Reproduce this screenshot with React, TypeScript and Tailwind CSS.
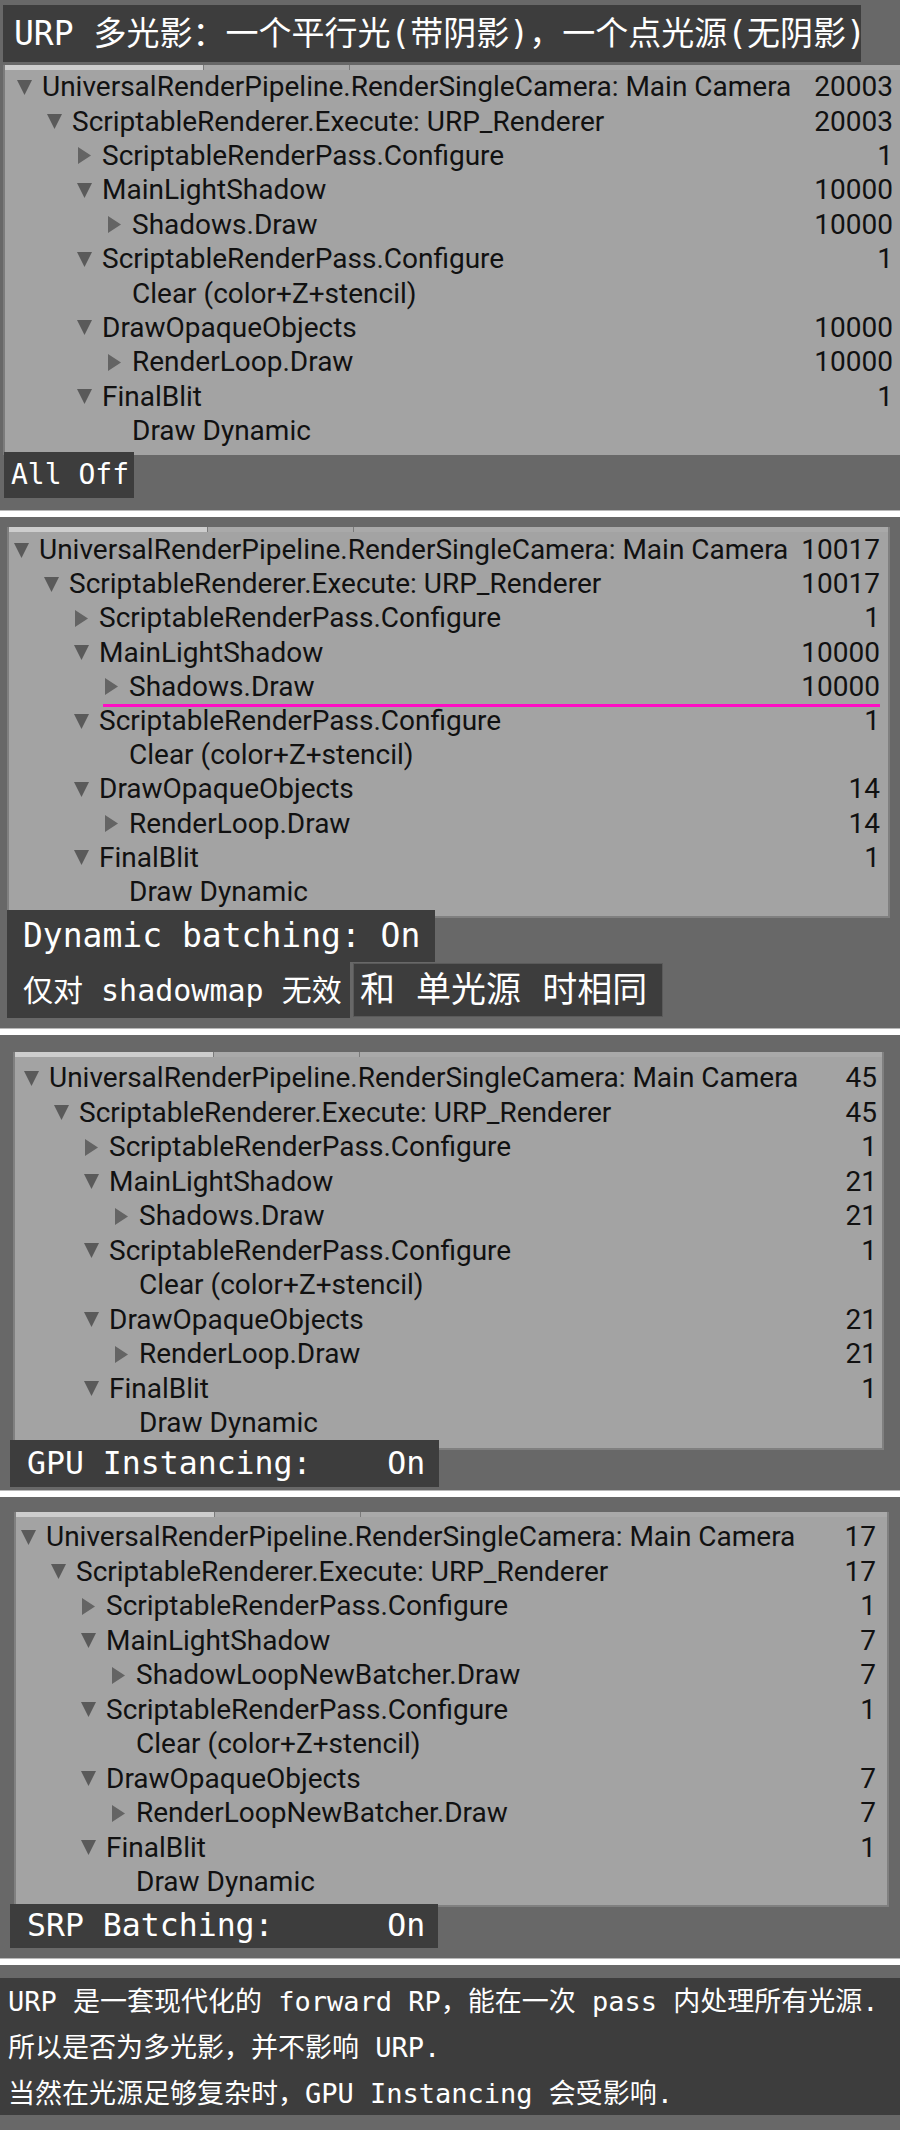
import React from 'react';

type Arrow = 'down' | 'right' | 'none';
type Row = { level: number; label: string; count: string; arrow: Arrow; mark?: boolean };

const buildRows = (c: string[], shadowLabel: string, loopLabel: string, markShadow = false): Row[] => [
  { level: 0, arrow: 'down', label: 'UniversalRenderPipeline.RenderSingleCamera: Main Camera', count: c[0] },
  { level: 1, arrow: 'down', label: 'ScriptableRenderer.Execute: URP_Renderer', count: c[1] },
  { level: 2, arrow: 'right', label: 'ScriptableRenderPass.Configure', count: '1' },
  { level: 2, arrow: 'down', label: 'MainLightShadow', count: c[2] },
  { level: 3, arrow: 'right', label: shadowLabel, count: c[2], mark: markShadow },
  { level: 2, arrow: 'down', label: 'ScriptableRenderPass.Configure', count: '1' },
  { level: 3, arrow: 'none', label: 'Clear (color+Z+stencil)', count: '' },
  { level: 2, arrow: 'down', label: 'DrawOpaqueObjects', count: c[3] },
  { level: 3, arrow: 'right', label: loopLabel, count: c[3] },
  { level: 2, arrow: 'down', label: 'FinalBlit', count: '1' },
  { level: 3, arrow: 'none', label: 'Draw Dynamic', count: '' },
];

const indentCls = ['w-0', 'w-[30px]', 'w-[60px]', 'w-[90px]'];

const MONO = "[font-family:'DejaVu_Sans_Mono','Noto_Sans_CJK_SC',monospace]";

function ArrowIcon({ arrow }: { arrow: Arrow }) {
  if (arrow === 'down')
    return (
      <svg width="15" height="15" viewBox="0 0 15 15" className="ml-[1px]">
        <path d="M0 0H15L7.5 15Z" fill="#5a5a5a" />
      </svg>
    );
  if (arrow === 'right')
    return (
      <svg width="13" height="17" viewBox="0 0 13 17" className="ml-[2px]">
        <path d="M0 0L13 8.5L0 17Z" fill="#646464" />
      </svg>
    );
  return null;
}

function TreeRow({ row, hCls }: { row: Row; hCls: string }) {
  return (
    <div className={`flex items-center ${hCls}`}>
      <div className={`shrink-0 ${indentCls[row.level]}`} />
      <div
        className={`flex h-full flex-1 items-center ${row.mark ? 'shadow-[0_3px_0_#ff0dc4]' : ''}`}
      >
        <span className="flex w-[26px] shrink-0 items-center">
          <ArrowIcon arrow={row.arrow} />
        </span>
        <span className="flex-1 whitespace-nowrap">{row.label}</span>
        <span className="whitespace-nowrap">{row.count}</span>
      </div>
    </div>
  );
}

function TabStrip() {
  return (
    <div className="flex h-[5px] shrink-0">
      <div className="w-[198px] bg-[#cdcdcd]" />
      <div className="w-[1px] bg-[#7a7a7a]" />
      <div className="w-[145px] bg-[#a9a9a9]" />
      <div className="w-[1px] bg-[#7a7a7a]" />
      <div className="flex-1 bg-[#a9a9a9]" />
    </div>
  );
}

function Tree({ rows, hCls }: { rows: Row[]; hCls: string }) {
  return (
    <>
      {rows.map((r, i) => (
        <TreeRow key={i} row={r} hCls={hCls} />
      ))}
    </>
  );
}

const TREE_TEXT = "[font-family:Roboto,'Noto_Sans',sans-serif] text-[28px] text-[#111111]";

function Separator() {
  return <div className="h-[7px] shrink-0 border-t border-[#b8b8b8] bg-white" />;
}

export default function App() {
  const rows1 = buildRows(['20003', '20003', '10000', '10000'], 'Shadows.Draw', 'RenderLoop.Draw');
  const rows2 = buildRows(['10017', '10017', '10000', '14'], 'Shadows.Draw', 'RenderLoop.Draw', true);
  const rows3 = buildRows(['45', '45', '21', '21'], 'Shadows.Draw', 'RenderLoop.Draw');
  const rows4 = buildRows(['17', '17', '7', '7'], 'ShadowLoopNewBatcher.Draw', 'RenderLoopNewBatcher.Draw');

  return (
    <div className="flex w-[900px] flex-col">
      {/* Section 1 */}
      <section className="flex h-[510px] shrink-0 flex-col bg-[#686868] pt-[5px]">
        <div
          className={`ml-[3px] flex h-[57px] w-[858px] items-center whitespace-nowrap bg-[#3d3d3d] pl-[11px] text-[33px] text-white ${MONO}`}
        >
          URP 多光影：一个平行光(带阴影)，一个点光源(无阴影)
        </div>
        <div className={`mt-[3px] ml-[3px] flex flex-col border-l-2 border-[#7c7c7c] bg-[#a3a3a3] pb-[7px] ${TREE_TEXT}`}>
          <TabStrip />
          <div className="flex flex-col pl-[11px] pr-[7px]">
            <Tree rows={rows1} hCls="h-[34.4px]" />
          </div>
        </div>
        <div
          className={`relative mt-[-3px] ml-[4px] flex h-[46px] w-[130px] items-center bg-[#3d3d3d] pl-[7px] text-[28px] text-white ${MONO}`}
        >
          All Off
        </div>
      </section>
      <Separator />

      {/* Section 2 */}
      <section className="flex h-[511px] shrink-0 flex-col bg-[#686868] pt-[10px]">
        <div className={`ml-[7px] flex w-[883px] flex-col border-x-2 border-b-2 border-[#808080] bg-[#a3a3a3] pb-[7px] ${TREE_TEXT}`}>
          <TabStrip />
          <div className="flex flex-col pt-[1px] pl-[4px] pr-[8px]">
            <Tree rows={rows2} hCls="h-[34.2px]" />
          </div>
        </div>
        <div
          className={`relative mt-[-8px] ml-[7px] flex h-[52px] w-[428px] items-center whitespace-nowrap bg-[#3d3d3d] pl-[16px] text-[33px] text-white ${MONO}`}
        >
          Dynamic batching: On
        </div>
        <div className="ml-[7px] flex">
          <div
            className={`flex h-[56px] w-[343px] items-center whitespace-nowrap bg-[#3d3d3d] pl-[16px] text-[30px] text-white ${MONO}`}
          >
            仅对 shadowmap 无效
          </div>
          <div
            className={`mt-[1px] ml-[3px] flex h-[54px] w-[310px] items-center whitespace-nowrap border border-[#5a5a5a] bg-[#3d3d3d] pl-[6px] text-[35px] text-white ${MONO}`}
          >
            和 单光源 时相同
          </div>
        </div>
      </section>
      <Separator />

      {/* Section 3 */}
      <section className="flex h-[455px] shrink-0 flex-col bg-[#686868] pt-[17px]">
        <div className={`ml-[13px] flex w-[871px] flex-col border-x-2 border-b-2 border-[#808080] bg-[#a3a3a3] pb-[7.5px] ${TREE_TEXT}`}>
          <TabStrip />
          <div className="flex flex-col pt-[4px] pl-[8px] pr-[5px]">
            <Tree rows={rows3} hCls="h-[34.5px]" />
          </div>
        </div>
        <div
          className={`relative mt-[-10px] ml-[10px] flex h-[47px] w-[429px] items-center whitespace-pre bg-[#3d3d3d] pl-[17px] text-[31.5px] text-white ${MONO}`}
        >
          {'GPU Instancing:    On'}
        </div>
      </section>
      <Separator />

      {/* Section 4 */}
      <section className="flex h-[461px] shrink-0 flex-col bg-[#686868] pt-[15px]">
        <div className={`ml-[14px] flex w-[875px] flex-col border-x-2 border-b-2 border-[#808080] bg-[#a3a3a3] pb-[5.5px] ${TREE_TEXT}`}>
          <TabStrip />
          <div className="flex flex-col pt-[3px] pl-[4px] pr-[11px]">
            <Tree rows={rows4} hCls="h-[34.5px]" />
          </div>
        </div>
        <div
          className={`relative mt-[-3px] ml-[10px] flex h-[44px] w-[428px] items-center whitespace-pre bg-[#3d3d3d] pl-[17px] text-[31.5px] text-white ${MONO}`}
        >
          {'SRP Batching:      On'}
        </div>
      </section>
      <Separator />

      {/* Section 5 */}
      <section className="flex h-[165px] shrink-0 flex-col bg-[#686868] pt-[13px]">
        <div
          className={`flex h-[137px] flex-col whitespace-nowrap bg-[#3d3d3d] pt-[1px] pl-[8px] text-[27px] leading-[46px] text-white ${MONO}`}
        >
          <div>URP 是一套现代化的 forward RP，能在一次 pass 内处理所有光源.</div>
          <div>所以是否为多光影，并不影响 URP.</div>
          <div>当然在光源足够复杂时，GPU Instancing 会受影响.</div>
        </div>
      </section>
    </div>
  );
}
